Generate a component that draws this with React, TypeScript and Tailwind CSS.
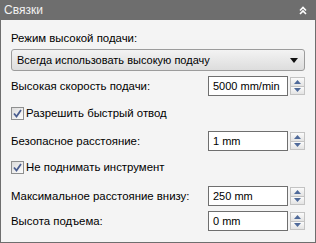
import { ReactNode } from 'react'

const font = { fontFamily: '"Liberation Sans", Arial, sans-serif' }

function Spinner() {
  return (
    <div className="flex h-[18px] w-[15px] flex-col border border-[#c3c3c3] bg-[#f0f0f0]">
      <div className="flex flex-1 items-center justify-center border-b border-[#c3c3c3] bg-gradient-to-b from-[#fbfbfb] to-[#e3e3e3]">
        <svg width="7" height="4" viewBox="0 0 7 4">
          <path d="M0 4 L3.5 0 L7 4 Z" fill="#4f6a9a" />
        </svg>
      </div>
      <div className="flex flex-1 items-center justify-center bg-gradient-to-b from-[#fbfbfb] to-[#e3e3e3]">
        <svg width="7" height="4" viewBox="0 0 7 4">
          <path d="M0 0 L7 0 L3.5 4 Z" fill="#4f6a9a" />
        </svg>
      </div>
    </div>
  )
}

function NumberRow({ label, value, className = '' }: { label: string; value: string; className?: string }) {
  return (
    <div className={`flex h-[20px] items-center ${className}`}>
      <span className="flex-1 text-[11.4px] leading-[14px] text-black">{label}</span>
      <div className="flex h-[20px] w-[80px] items-center border border-[#6f6f6f] bg-white pl-[4px] text-[11px] text-black">
        {value}
      </div>
      <div className="ml-[2px]">
        <Spinner />
      </div>
    </div>
  )
}

function Check({ children, className = '' }: { children: ReactNode; className?: string }) {
  return (
    <div className={`flex h-[14px] items-center ${className}`}>
      <div className="flex h-[13px] w-[13px] items-center justify-center border border-[#8e8f8f] bg-gradient-to-br from-[#dcdcdc] to-[#fdfdfd]">
        <svg width="9" height="9" viewBox="0 0 9 9">
          <path d="M1 4.5 L3.5 7.5 L8 1" fill="none" stroke="#4a5d8f" strokeWidth="1.8" />
        </svg>
      </div>
      <span className="ml-[2px] text-[11.4px] leading-[14px] text-black">{children}</span>
    </div>
  )
}

export default function App() {
  return (
    <div className="flex h-[243px] w-[316px] flex-col bg-[#6e6e6e]" style={font}>
      {/* Header */}
      <div className="flex h-[20px] items-center justify-between pl-[4px] pr-[9px]">
        <span className="text-[12px] leading-[16px] text-[#f2f2f2]">Связки</span>
        <svg width="8" height="9" viewBox="0 0 8 9">
          <path d="M1 4.5 L4 1.5 L7 4.5 M1 8 L4 5 L7 8" fill="none" stroke="#ffffff" strokeWidth="1.6" />
        </svg>
      </div>

      {/* Body */}
      <div className="mx-px mb-px flex flex-1 flex-col bg-[#f4f4f4] px-[10px] pt-[11px]">
        <span className="text-[11.4px] leading-[14px] text-black">Режим высокой подачи:</span>
        <div className="mt-[4px] flex h-[22px] items-center justify-between rounded-[3px] border border-[#9c9c9c] bg-gradient-to-b from-[#f3f3f3] to-[#dddddd] pl-[5px] pr-[6px]">
          <span className="text-[11px] leading-[14px] text-black">Всегда использовать высокую подачу</span>
          <svg width="8" height="5" viewBox="0 0 8 5">
            <path d="M0 0 L8 0 L4 5 Z" fill="#111111" />
          </svg>
        </div>

        <NumberRow label="Высокая скорость подачи:" value="5000 mm/min" className="mt-[5px]" />
        <Check className="mt-[10px]">Разрешить быстрый отвод</Check>
        <NumberRow label="Безопасное расстояние:" value="1 mm" className="mt-[11px]" />
        <Check className="mt-[9px]">Не поднимать инструмент</Check>
        <NumberRow label="Максимальное расстояние внизу:" value="250 mm" className="mt-[12px]" />
        <NumberRow label="Высота подъема:" value="0 mm" className="mt-[5px]" />
      </div>
    </div>
  )
}
